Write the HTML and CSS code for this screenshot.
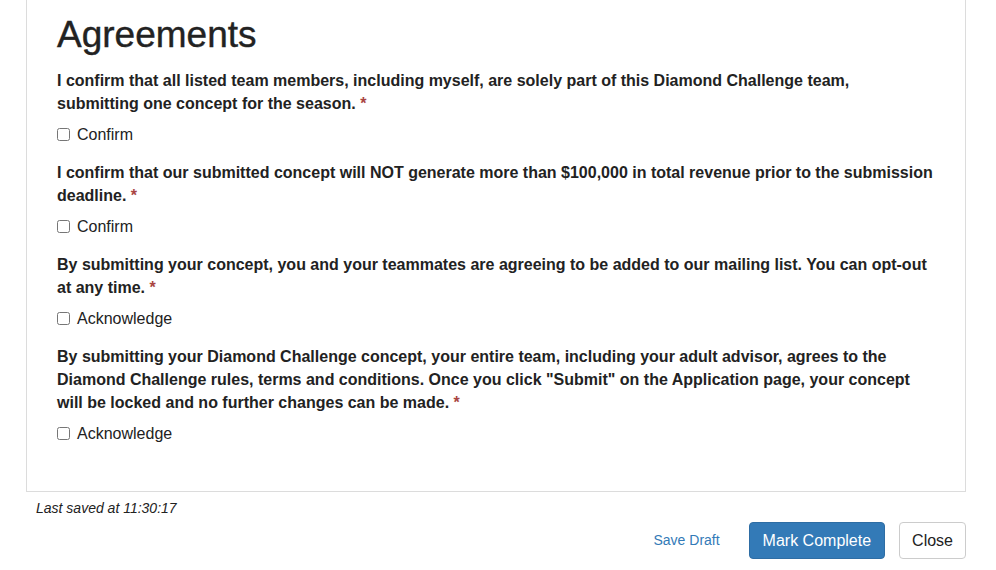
FILE: index.html
```html
<!DOCTYPE html>
<html lang="en">
<head>
    <meta charset="UTF-8">
    <meta name="viewport" content="width=device-width, initial-scale=1.0">
    <title>Agreements</title>
    <link rel="stylesheet" href="styles.css">
</head>
<body>
    <div class="page">
        <div class="panel">
            <h1>Agreements</h1>

            <div class="form-group">
                <label class="question">I confirm that all listed team members, including myself, are solely part of this Diamond Challenge team, submitting one concept for the season. <span class="required">*</span></label>
                <div class="checkbox">
                    <label><input type="checkbox" name="soleTeam"> Confirm</label>
                </div>
            </div>

            <div class="form-group">
                <label class="question">I confirm that our submitted concept will NOT generate more than $100,000 in total revenue prior to the submission deadline. <span class="required">*</span></label>
                <div class="checkbox">
                    <label><input type="checkbox" name="revenue"> Confirm</label>
                </div>
            </div>

            <div class="form-group">
                <label class="question">By submitting your concept, you and your teammates are agreeing to be added to our mailing list. You can opt-out at any time. <span class="required">*</span></label>
                <div class="checkbox">
                    <label><input type="checkbox" name="mailingList"> Acknowledge</label>
                </div>
            </div>

            <div class="form-group">
                <label class="question">By submitting your Diamond Challenge concept, your entire team, including your adult advisor, agrees to the Diamond Challenge rules, terms and conditions. Once you click "Submit" on the Application page, your concept will be locked and no further changes can be made. <span class="required">*</span></label>
                <div class="checkbox">
                    <label><input type="checkbox" name="rules"> Acknowledge</label>
                </div>
            </div>
        </div>

        <p class="last-saved">Last saved at 11:30:17</p>

        <div class="actions">
            <a href="#" class="btn-link">Save Draft</a>
            <button type="button" class="btn btn-primary">Mark Complete</button>
            <button type="button" class="btn btn-default">Close</button>
        </div>
    </div>
</body>
</html>
```

FILE: styles.css
```css
/* Reset some default styles */
body, h1, p, label, button {
    margin: 0;
    padding: 0;
    box-sizing: border-box;
}

body {
    font-family: "Liberation Sans", Helvetica, Arial, sans-serif;
    font-size: 16px;
    line-height: 23px;
    color: #222;
    background-color: #fff;
}

.page {
    width: 940px;
    margin-left: 26px;
}

.panel {
    box-sizing: border-box;
    width: 940px;
    padding: 15px 31px 31px 30px;
    border: 1px solid #dcdcdc;
    border-top: none;
}

h1 {
    font-size: 37px;
    font-weight: 400;
    line-height: 40px;
    margin-bottom: 14px;
    color: #222;
    -webkit-text-stroke: 0.4px #222;
}

.form-group {
    margin-bottom: 15px;
}

.question {
    display: block;
    font-weight: 700;
    margin-bottom: 8px;
}

.required {
    color: #a94442;
}

.checkbox label {
    display: flex;
    align-items: center;
    gap: 7px;
    font-weight: 400;
    color: #222;
}

.checkbox input {
    width: 13px;
    height: 13px;
    margin: 0;
}

.last-saved {
    margin-top: 6px;
    padding-left: 10px;
    font-size: 14px;
    line-height: 20px;
    font-style: italic;
    color: #222;
}

.actions {
    display: flex;
    justify-content: flex-end;
    align-items: center;
    margin-top: 4px;
}

.btn-link {
    font-size: 14px;
    color: #337ab7;
    text-decoration: none;
    margin-right: 29px;
}

.btn {
    font-family: inherit;
    font-size: 16px;
    line-height: 23px;
    padding: 6px 13px;
    border: 1px solid transparent;
    border-radius: 4px;
    cursor: pointer;
}

.btn-primary {
    background-color: #337ab7;
    border-color: #2e6da4;
    color: #fff;
    margin-right: 14px;
}

.btn-default {
    background-color: #fff;
    border-color: #ccc;
    color: #222;
    padding: 6px 12px;
}
```
